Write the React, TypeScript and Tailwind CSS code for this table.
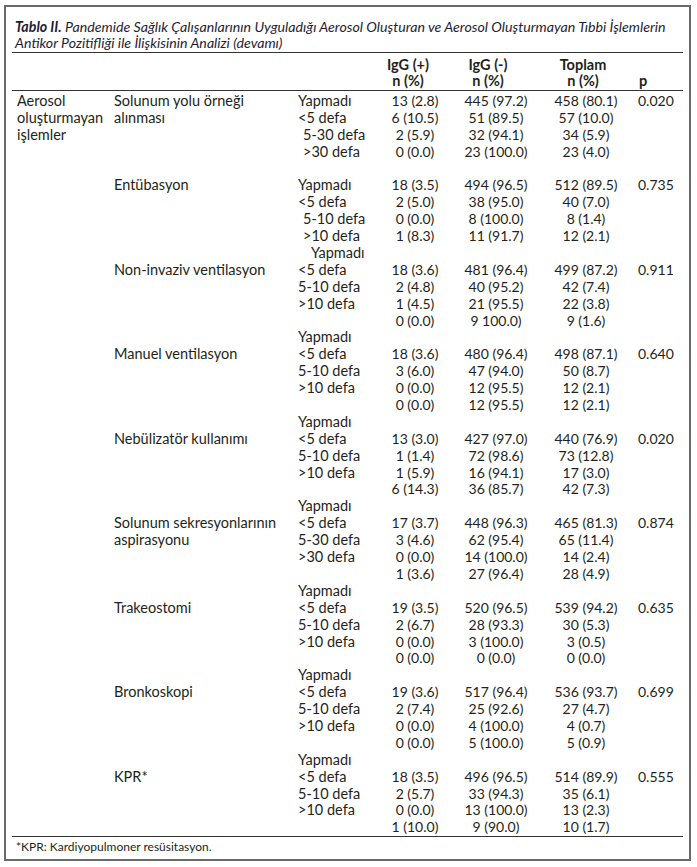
import { FC } from "react";

type Row = {
  a?: string;
  b?: string;
  c?: string;
  ci?: 0 | 1 | 2;
  n1: string;
  n2: string;
  n3: string;
  p?: string;
};

const blank: Row = { n1: "", n2: "", n3: "" };

const rows: Row[] = [
  { a: "Aerosol", b: "Solunum yolu örneği", c: "Yapmadı", n1: "13 (2.8)", n2: "445 (97.2)", n3: "458 (80.1)", p: "0.020" },
  { a: "oluşturmayan", b: "alınması", c: "<5 defa", n1: "6 (10.5)", n2: "51 (89.5)", n3: "57 (10.0)" },
  { a: "işlemler", c: "5-30 defa", ci: 1, n1: "2 (5.9)", n2: "32 (94.1)", n3: "34 (5.9)" },
  { c: ">30 defa", ci: 1, n1: "0 (0.0)", n2: "23 (100.0)", n3: "23 (4.0)" },
  blank,
  { b: "Entübasyon", c: "Yapmadı", n1: "18 (3.5)", n2: "494 (96.5)", n3: "512 (89.5)", p: "0.735" },
  { c: "<5 defa", n1: "2 (5.0)", n2: "38 (95.0)", n3: "40 (7.0)" },
  { c: "5-10 defa", ci: 1, n1: "0 (0.0)", n2: "8 (100.0)", n3: "8 (1.4)" },
  { c: ">10 defa", ci: 1, n1: "1 (8.3)", n2: "11 (91.7)", n3: "12 (2.1)" },
  { c: "Yapmadı", ci: 2, n1: "", n2: "", n3: "" },
  { b: "Non-invaziv ventilasyon", c: "<5 defa", n1: "18 (3.6)", n2: "481 (96.4)", n3: "499 (87.2)", p: "0.911" },
  { c: "5-10 defa", n1: "2 (4.8)", n2: "40 (95.2)", n3: "42 (7.4)" },
  { c: ">10 defa", n1: "1 (4.5)", n2: "21 (95.5)", n3: "22 (3.8)" },
  { n1: "0 (0.0)", n2: "9 100.0)", n3: "9 (1.6)" },
  { c: "Yapmadı", n1: "", n2: "", n3: "" },
  { b: "Manuel ventilasyon", c: "<5 defa", n1: "18 (3.6)", n2: "480 (96.4)", n3: "498 (87.1)", p: "0.640" },
  { c: "5-10 defa", n1: "3 (6.0)", n2: "47 (94.0)", n3: "50 (8.7)" },
  { c: ">10 defa", n1: "0 (0.0)", n2: "12 (95.5)", n3: "12 (2.1)" },
  { n1: "0 (0.0)", n2: "12 (95.5)", n3: "12 (2.1)" },
  { c: "Yapmadı", n1: "", n2: "", n3: "" },
  { b: "Nebülizatör kullanımı", c: "<5 defa", n1: "13 (3.0)", n2: "427 (97.0)", n3: "440 (76.9)", p: "0.020" },
  { c: "5-10 defa", n1: "1 (1.4)", n2: "72 (98.6)", n3: "73 (12.8)" },
  { c: ">10 defa", n1: "1 (5.9)", n2: "16 (94.1)", n3: "17 (3.0)" },
  { n1: "6 (14.3)", n2: "36 (85.7)", n3: "42 (7.3)" },
  { c: "Yapmadı", n1: "", n2: "", n3: "" },
  { b: "Solunum sekresyonlarının", c: "<5 defa", n1: "17 (3.7)", n2: "448 (96.3)", n3: "465 (81.3)", p: "0.874" },
  { b: "aspirasyonu", c: "5-30 defa", n1: "3 (4.6)", n2: "62 (95.4)", n3: "65 (11.4)" },
  { c: ">30 defa", n1: "0 (0.0)", n2: "14 (100.0)", n3: "14 (2.4)" },
  { n1: "1 (3.6)", n2: "27 (96.4)", n3: "28 (4.9)" },
  { c: "Yapmadı", n1: "", n2: "", n3: "" },
  { b: "Trakeostomi", c: "<5 defa", n1: "19 (3.5)", n2: "520 (96.5)", n3: "539 (94.2)", p: "0.635" },
  { c: "5-10 defa", n1: "2 (6.7)", n2: "28 (93.3)", n3: "30 (5.3)" },
  { c: ">10 defa", n1: "0 (0.0)", n2: "3 (100.0)", n3: "3 (0.5)" },
  { n1: "0 (0.0)", n2: "0 (0.0)", n3: "0 (0.0)" },
  { c: "Yapmadı", n1: "", n2: "", n3: "" },
  { b: "Bronkoskopi", c: "<5 defa", n1: "19 (3.6)", n2: "517 (96.4)", n3: "536 (93.7)", p: "0.699" },
  { c: "5-10 defa", n1: "2 (7.4)", n2: "25 (92.6)", n3: "27 (4.7)" },
  { c: ">10 defa", n1: "0 (0.0)", n2: "4 (100.0)", n3: "4 (0.7)" },
  { n1: "0 (0.0)", n2: "5 (100.0)", n3: "5 (0.9)" },
  { c: "Yapmadı", n1: "", n2: "", n3: "" },
  { b: "KPR*", c: "<5 defa", n1: "18 (3.5)", n2: "496 (96.5)", n3: "514 (89.9)", p: "0.555" },
  { c: "5-10 defa", n1: "2 (5.7)", n2: "33 (94.3)", n3: "35 (6.1)" },
  { c: ">10 defa", n1: "0 (0.0)", n2: "13 (100.0)", n3: "13 (2.3)" },
  { n1: "1 (10.0)", n2: "9 (90.0)", n3: "10 (1.7)" },
];

const indent = ["pl-[2px]", "pl-[7px]", "pl-[15px]"];

const cols = "grid grid-cols-[100px_184px_80px_78px_84px_96px_1fr]";

const DataRow: FC<{ row: Row }> = ({ row }) => (
  <div className={`${cols} h-[16.9px] leading-[16.9px] whitespace-nowrap`}>
    <div className="pl-[5px] text-[14.5px]">{row.a}</div>
    <div className="pl-[2px] text-[14.5px]">{row.b}</div>
    <div className={`${indent[row.ci ?? 0]} text-[14.5px]`}>{row.c}</div>
    <div className="text-center">{row.n1}</div>
    <div className="text-center">{row.n2}</div>
    <div className="text-center">{row.n3}</div>
    <div className="pl-[4px]">{row.p}</div>
  </div>
);

export default function App() {
  return (
    <div className="bg-white w-[697px] h-[867px] pt-[5px] pl-[4px] font-['Lato',sans-serif] text-[#231f20]">
      <div className="w-[687px] h-[856px] border-2 border-[#6a6a6a] px-[6px] flex flex-col">
        <div className="pt-[12px] pl-[3px] text-[14.2px] leading-[16px] italic text-[#1f1d33] whitespace-nowrap">
          <span className="font-bold">Tablo II.</span> Pandemide Sağlık Çalışanlarının Uyguladığı
          Aerosol Oluşturan ve Aerosol Oluşturmayan Tıbbi İşlemlerin
          <br />
          Antikor Pozitifliği ile İlişkisinin Analizi (devamı)
        </div>
        <div className="mt-[1px] border-t-[1.5px] border-[#333]" />
        <div className={`${cols} pt-[4px] pb-[1px] text-[14.5px] leading-[16px] font-bold`}>
          <div />
          <div />
          <div />
          <div className="text-center pr-[14px]">
            IgG (+)
            <br />n (%)
          </div>
          <div className="text-center pr-[16px]">
            IgG (-)
            <br />n (%)
          </div>
          <div className="text-center pr-[6px]">
            Toplam
            <br />n (%)
          </div>
          <div className="pl-[5px] flex items-end">p</div>
        </div>
        <div className="border-t-[1.5px] border-[#333]" />
        <div className="pt-[2px] text-[14px]">
          {rows.map((r, i) => (
            <DataRow key={i} row={r} />
          ))}
        </div>
        <div className="mt-auto border-t-[1.5px] border-[#333]" />
        <div className="pl-[4px] pt-[2px] pb-[7px] text-[12px] leading-[16px]">
          *KPR: Kardiyopulmoner resüsitasyon.
        </div>
      </div>
    </div>
  );
}
